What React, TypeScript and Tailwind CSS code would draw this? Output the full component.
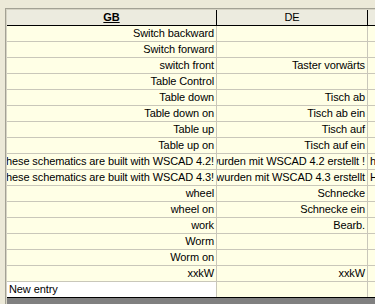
import React from "react";

type Row = { gb: string; de: string; x?: string };

const rows: Row[] = [
  { gb: "Switch backward", de: "" },
  { gb: "Switch forward", de: "" },
  { gb: "switch front", de: "Taster vorwärts" },
  { gb: "Table Control", de: "" },
  { gb: "Table down", de: "Tisch ab" },
  { gb: "Table down on", de: "Tisch ab ein" },
  { gb: "Table up", de: "Tisch auf" },
  { gb: "Table up on", de: "Tisch auf ein" },
  { gb: "These schematics are built with WSCAD 4.2!", de: "Diese Schaltpläne wurden mit WSCAD 4.2 erstellt !", x: "h" },
  { gb: "These schematics are built with WSCAD 4.3!", de: "Diese Schaltpläne wurden mit WSCAD 4.3 erstellt", x: "H" },
  { gb: "wheel", de: "Schnecke" },
  { gb: "wheel on", de: "Schnecke ein" },
  { gb: "work", de: "Bearb." },
  { gb: "Worm", de: "" },
  { gb: "Worm on", de: "" },
  { gb: "xxkW", de: "xxkW" },
];

function Cell({ text, w }: { text: string; w: string }) {
  return (
    <div className={`${w} shrink-0 h-full flex justify-end overflow-hidden border-r border-[#c9c7ba] pr-[2px]`}>
      <span className="shrink-0 whitespace-nowrap">{text}</span>
    </div>
  );
}

export default function App() {
  return (
    <div
      className="w-[375px] h-[304px] overflow-hidden bg-[#ece9d8] pt-[8px] pl-[5px] flex flex-col text-[11px] leading-[15px] tracking-[-0.1px] text-black"
      style={{ fontFamily: '"Liberation Sans", Arial, sans-serif' }}
    >
      <div className="flex-1 flex flex-col border-t border-l border-[#a3a194]">
        <div className="flex-1 flex flex-col border-t border-l border-[#d6d3c4] w-[600px]">
          {/* header */}
          <div className="flex h-[16px] bg-[#ecebdf] border-b border-black">
            <div className="w-[210px] shrink-0 border-r border-black flex justify-center">
              <span className="font-bold underline">GB</span>
            </div>
            <div className="w-[151px] shrink-0 border-r border-black flex justify-center">
              <span>DE</span>
            </div>
            <div className="flex-1" />
          </div>
          {/* rows */}
          {rows.map((r, i) => (
            <div key={i} className="flex h-[16px] bg-[#ffffe6] border-b border-[#c9c7ba]">
              <Cell text={r.gb} w="w-[210px]" />
              <Cell text={r.de} w="w-[151px]" />
              <div className="flex-1 pl-[2px] whitespace-nowrap">{r.x ?? ""}</div>
            </div>
          ))}
          {/* new entry */}
          <div className="flex h-[15px] bg-[#ffffe6]">
            <div className="w-[210px] shrink-0 bg-white border-r border-[#c9c7ba] pl-[2px]">New entry</div>
            <div className="w-[151px] shrink-0 border-r border-[#c9c7ba]" />
            <div className="flex-1" />
          </div>
          <div className="flex-1 bg-[#808080] border-t border-black" />
        </div>
      </div>
    </div>
  );
}
